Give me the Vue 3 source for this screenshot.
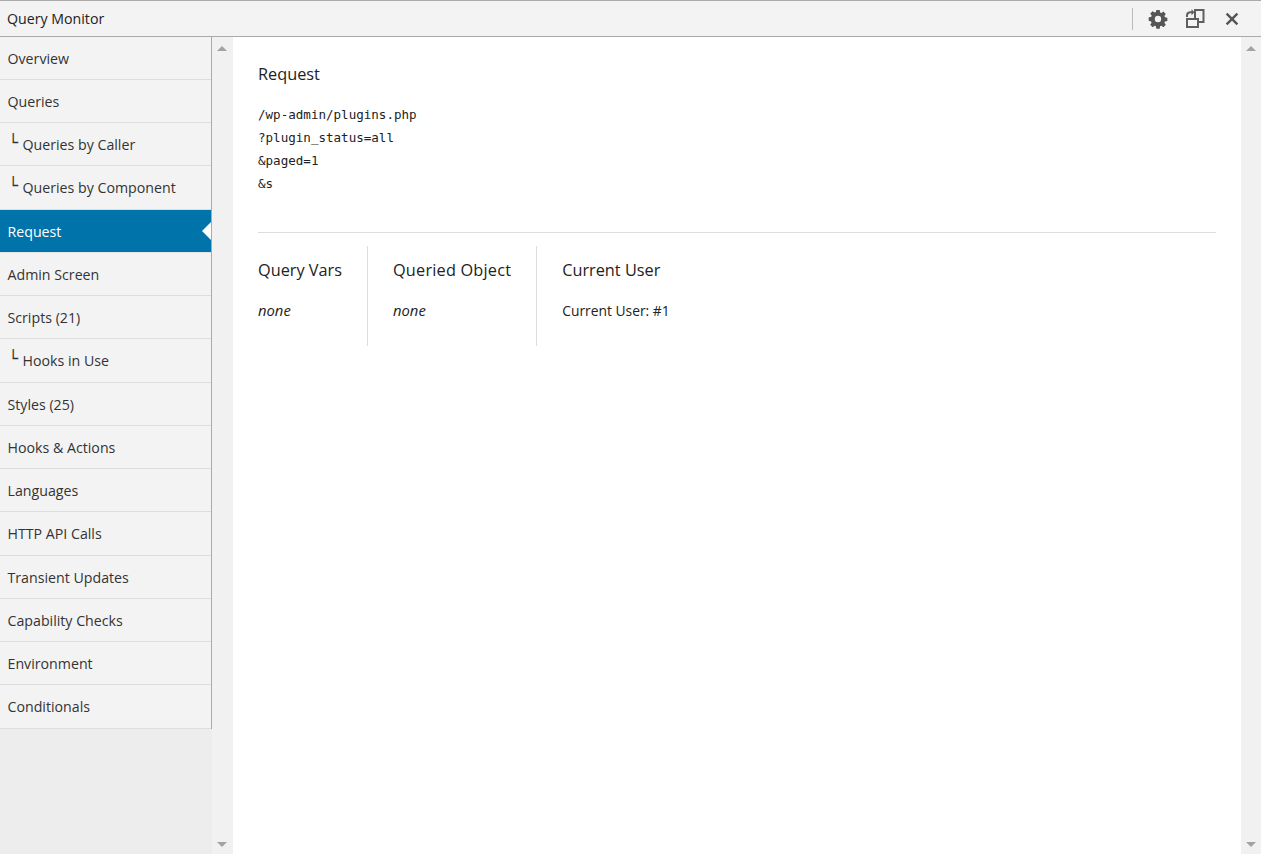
<script setup>
const items = [
  { label: 'Overview' },
  { label: 'Queries' },
  { label: 'Queries by Caller', sub: true },
  { label: 'Queries by Component', sub: true },
  { label: 'Request', active: true },
  { label: 'Admin Screen' },
  { label: 'Scripts (21)' },
  { label: 'Hooks in Use', sub: true },
  { label: 'Styles (25)' },
  { label: 'Hooks & Actions' },
  { label: 'Languages' },
  { label: 'HTTP API Calls' },
  { label: 'Transient Updates' },
  { label: 'Capability Checks' },
  { label: 'Environment' },
  { label: 'Conditionals' }
]
</script>

<template>
  <div class="qm">
    <header class="bar">
      <div class="title">Query Monitor</div>
      <div class="tools">
        <span class="sep"></span>
        <svg class="ic gear" width="20" height="20" viewBox="0 0 20 20">
          <path fill="#555" fill-rule="evenodd" d="M8.3 1h3.4l.4 2.4 1.3.55 2-1.4 2.4 2.4-1.4 2 .55 1.3 2.4.4v3.4l-2.4.4-.55 1.3 1.4 2-2.4 2.4-2-1.4-1.3.55-.4 2.4H8.3l-.4-2.4-1.3-.55-2 1.4-2.4-2.4 1.4-2-.55-1.3L.7 11.7V8.3l2.4-.4.55-1.3-1.4-2 2.4-2.4 2 1.4 1.3-.55zM10 6.8a3.2 3.2 0 1 0 0 6.4 3.2 3.2 0 0 0 0-6.4z"/>
        </svg>
        <svg class="ic pop" width="20" height="21" viewBox="0 0 20 21">
          <path fill="none" stroke="#5f5f5f" stroke-width="2" d="M10 2h8.5v12H13"/>
          <path fill="none" stroke="#5f5f5f" stroke-width="2" d="M10 1v9"/>
          <path fill="#f3f3f3" stroke="#5f5f5f" stroke-width="2" d="M2 11h11v8H2z"/>
          <path fill="none" stroke="#5f5f5f" stroke-width="2" d="M2 9V7.5Q2 4.5 5 4.2h2"/>
          <path fill="#5f5f5f" d="M6.5 1.2l3 3-3 3z"/>
        </svg>
        <svg class="ic close" width="14" height="14" viewBox="0 0 14 14">
          <path fill="none" stroke="#555" stroke-width="2.4" d="M1.6 1.6l10.8 10.8M12.4 1.6L1.6 12.4"/>
        </svg>
      </div>
    </header>
    <div class="body">
      <aside class="side">
        <nav class="nav">
          <a v-for="it in items" :key="it.label" class="item" :class="{ active: it.active }">
            <span v-if="it.sub" class="corner">└</span>{{ it.label }}
          </a>
        </nav>
      </aside>
      <div class="scroll">
        <i class="up"></i><i class="down"></i>
      </div>
      <main class="main">
        <section class="request">
          <h3>Request</h3>
          <div class="code">
            <div>/wp-admin/plugins.php</div>
            <div>?plugin_status=all</div>
            <div>&amp;paged=1</div>
            <div>&amp;s</div>
          </div>
        </section>
        <section class="cols">
          <div class="col first">
            <h3>Query Vars</h3>
            <p><em>none</em></p>
          </div>
          <div class="col wide">
            <h3>Queried Object</h3>
            <p><em>none</em></p>
          </div>
          <div class="col last">
            <h3>Current User</h3>
            <p>Current User: #1</p>
          </div>
        </section>
      </main>
      <div class="scroll right">
        <i class="up"></i><i class="down"></i>
      </div>
    </div>
  </div>
</template>

<style>
html, body { margin: 0; padding: 0; background: #fff; }
</style>

<style scoped>
.qm {
  width: 1261px;
  height: 854px;
  display: flex;
  flex-direction: column;
  overflow: hidden;
  font-family: "Open Sans", "Noto Sans", sans-serif;
  color: #222;
  background: #fff;
}
.bar {
  box-sizing: border-box;
  height: 37px;
  flex: none;
  display: flex;
  align-items: center;
  justify-content: space-between;
  background: #f3f3f3;
  border-top: 1px solid #aaa;
  border-bottom: 1px solid #aaa;
}
.title {
  padding-left: 7px;
  font-size: 14.2px;
  color: #222;
}
.tools {
  display: flex;
  align-items: center;
  height: 100%;
}
.sep {
  width: 1px;
  height: 22px;
  background: #bbb;
  margin-right: 15px;
}
.ic { display: block; flex: none; }
.gear { margin-right: 17px; }
.pop { margin-right: 20px; }
.close { margin-right: 22px; }
.body {
  flex: 1;
  display: flex;
  min-height: 0;
}
.side {
  box-sizing: border-box;
  width: 212px;
  flex: none;
  background: #ededed;
}
.nav {
  margin-top: -0.3px;
  background: #f3f3f3;
  border-right: 1px solid #aaa;
}
.item {
  box-sizing: border-box;
  display: block;
  height: 43.25px;
  line-height: 43px;
  padding-left: 7.5px;
  font-size: 14.2px;
  color: #333;
  border-bottom: 1px solid #ddd;
  white-space: nowrap;
}
.corner {
  display: inline-block;
  box-sizing: border-box;
  width: 15px;
  padding-left: 1px;
  font-size: 16px;
  line-height: 16px;
  font-family: "DejaVu Sans", sans-serif;
  vertical-align: 2px;
}
.item.active {
  position: relative;
  background: #0073aa;
  color: #fff;
  border-bottom-color: #e4e4e4;
}
.item.active::after {
  content: "";
  position: absolute;
  right: 0;
  top: 50%;
  margin-top: -9px;
  border: 9px solid transparent;
  border-left: 0;
  border-right: 9px solid #fff;
}
.scroll {
  position: relative;
  width: 21px;
  flex: none;
  background: #f1f1f1;
}
.scroll.right { width: 20px; }
.up, .down {
  position: absolute;
  left: 5px;
  width: 0;
  height: 0;
  border-left: 5px solid transparent;
  border-right: 5px solid transparent;
}
.up { top: 9px; border-bottom: 5px solid #a3a3a3; }
.down { bottom: 7px; border-top: 5px solid #a3a3a3; }
.main {
  flex: 1;
  min-width: 0;
  background: #fff;
  padding: 0 25px;
}
h3 {
  margin: 0;
  font-size: 16.3px;
  font-weight: 400;
  line-height: 22px;
  color: #222;
}
.request {
  padding: 26px 0 37px;
  border-bottom: 1px solid #ddd;
}
.code {
  margin-top: 18px;
  font-family: "DejaVu Sans Mono", monospace;
  font-size: 12.55px;
  line-height: 23px;
  color: #222;
}
.cols {
  display: flex;
  margin-top: 13px;
}
.col {
  box-sizing: border-box;
  height: 100px;
  padding: 13px 25px 0;
  border-right: 1px solid #ddd;
}
.col.first { padding-left: 0; }
.col.last { border-right: 0; }
.col.wide h3 { letter-spacing: 0.2px; }
.col p {
  margin: 19px 0 0;
  font-size: 13.85px;
  line-height: 20px;
  color: #222;
}
.col.last p { margin-top: 20px; }
.col em { font-size: 14.8px; }
</style>
